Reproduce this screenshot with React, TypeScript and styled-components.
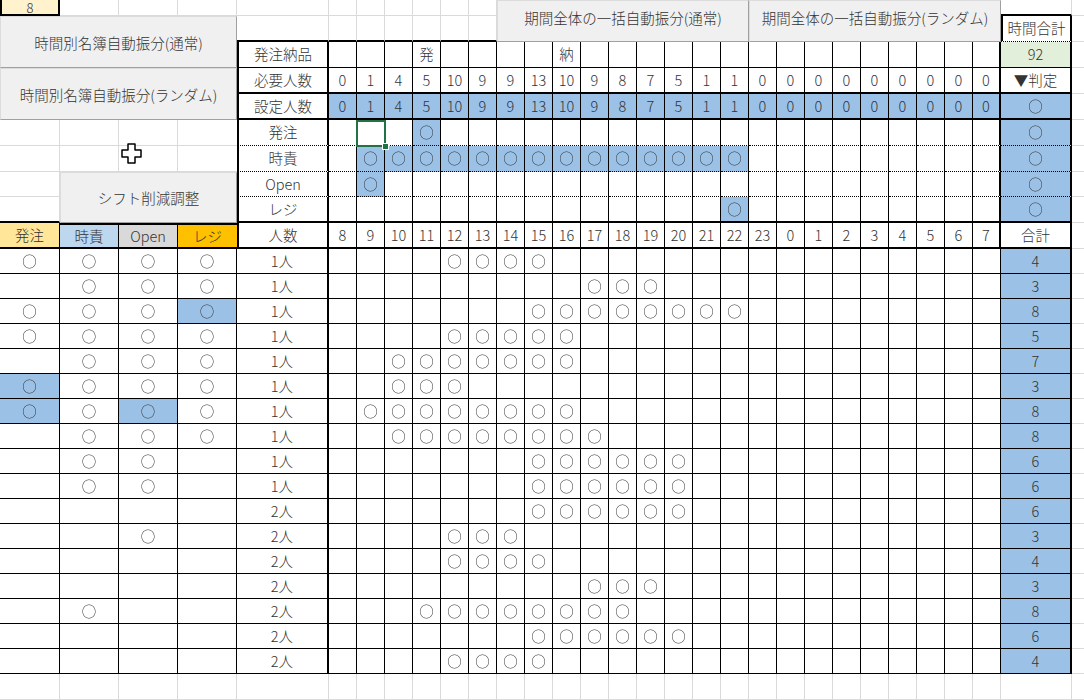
import React from "react";
import styled, { createGlobalStyle } from "styled-components";

type Line = "g" | "n" | "t" | "T" | "d";

const GRID = "#dadada";
const BLUE = "#9bc2e6";
const GREEN = "#e2efda";
const CIRCLE = "○";

const line = (l: Line) => {
  switch (l) {
    case "n":
      return "none";
    case "t":
      return "1px solid #000";
    case "T":
      return "2px solid #000";
    case "d":
      return "1px dotted #000";
    default:
      return `1px solid ${GRID}`;
  }
};

const GlobalStyle = createGlobalStyle`
  html, body {
    margin: 0;
    padding: 0;
    background: #fff;
  }
  body {
    overflow: hidden;
  }
`;

const Sheet = styled.div`
  position: relative;
  display: grid;
  grid-template-columns: 60px repeat(3, 59px) 92px repeat(24, 28px) 71px 1fr;
  grid-template-rows: 16px repeat(6, 26px) 25px 26px 26px repeat(17, 25px) 1fr;
  width: 1084px;
  height: 700px;
  overflow: hidden;
  background: #fff;
  font-family: "Noto Sans CJK JP", "Noto Sans", sans-serif;
  font-size: 14.5px;
  font-weight: 300;
  color: #333;
`;

interface CellProps {
  $r: number;
  $c: number;
  $bg?: string;
  $top?: Line;
  $right?: Line;
  $bottom?: Line;
  $left?: Line;
}

const Cell = styled.div<CellProps>`
  grid-row: ${(p) => p.$r};
  grid-column: ${(p) => p.$c};
  position: relative;
  box-sizing: border-box;
  display: flex;
  align-items: center;
  justify-content: center;
  min-width: 0;
  background: ${(p) => p.$bg || "#fff"};
  border-top: ${(p) => line(p.$top ?? "n")};
  border-right: ${(p) => line(p.$right ?? "g")};
  border-bottom: ${(p) => line(p.$bottom ?? "g")};
  border-left: ${(p) => line(p.$left ?? "n")};
  line-height: 1;
  white-space: nowrap;
`;

const TopCell = styled(Cell)`
  font-size: 13px;
  line-height: 13px;
`;

const Mark = styled.span`
  display: inline-block;
  font-size: 14.5px;
  color: #333;
  filter: grayscale(100%);
`;

const SheetButton = styled.div<{ $r: string; $c: string; $lift?: number }>`
  grid-row: ${(p) => p.$r};
  grid-column: ${(p) => p.$c};
  box-sizing: border-box;
  display: flex;
  align-items: center;
  justify-content: center;
  padding-bottom: ${(p) => p.$lift ?? 0}px;
  background: #f0f0f0;
  border: 1px solid;
  border-color: #dcdcdc #a0a0a0 #a0a0a0 #dcdcdc;
  font-size: 14.5px;
  color: #333;
  white-space: nowrap;
  z-index: 1;
`;

const ActiveFrame = styled.div`
  position: absolute;
  left: -1px;
  top: 0;
  right: -2px;
  bottom: -2px;
  border: 2px solid #217346;
  z-index: 3;
`;

const FillHandle = styled.div`
  position: absolute;
  right: -5px;
  bottom: -5px;
  width: 5px;
  height: 5px;
  background: #217346;
  border: 1px solid #fff;
`;

const Cursor = styled.svg`
  position: absolute;
  left: 121px;
  top: 143px;
  z-index: 5;
`;

const HOURS = [8, 9, 10, 11, 12, 13, 14, 15, 16, 17, 18, 19, 20, 21, 22, 23, 0, 1, 2, 3, 4, 5, 6, 7];
const NEEDED = [0, 1, 4, 5, 10, 9, 9, 13, 10, 9, 8, 7, 5, 1, 1, 0, 0, 0, 0, 0, 0, 0, 0, 0];

const hourCol = (h: number) => 6 + h;
const TOTAL_COL = 30;
const EDGE_COL = 31;

const range = (a: number, b: number) => Array.from({ length: b - a + 1 }, (_, i) => a + i);

interface Duty {
  label: string;
  on: number[];
}

const duties: Duty[] = [
  { label: "発注", on: [3] },
  { label: "時責", on: range(1, 14) },
  { label: "Open", on: [1] },
  { label: "レジ", on: [14] },
];

interface Staff {
  marks: number[];
  people: string;
  from: number;
  to: number;
}

// marks: 0 = empty, 1 = ○, 2 = ○ on blue
const staff: Staff[] = [
  { marks: [1, 1, 1, 1], people: "1人", from: 4, to: 7 },
  { marks: [0, 1, 1, 1], people: "1人", from: 9, to: 11 },
  { marks: [1, 1, 1, 2], people: "1人", from: 7, to: 14 },
  { marks: [1, 1, 1, 1], people: "1人", from: 4, to: 8 },
  { marks: [0, 1, 1, 1], people: "1人", from: 2, to: 8 },
  { marks: [2, 1, 1, 1], people: "1人", from: 2, to: 4 },
  { marks: [2, 1, 2, 1], people: "1人", from: 1, to: 8 },
  { marks: [0, 1, 1, 1], people: "1人", from: 2, to: 9 },
  { marks: [0, 1, 1, 0], people: "1人", from: 7, to: 12 },
  { marks: [0, 1, 1, 0], people: "1人", from: 7, to: 12 },
  { marks: [0, 0, 0, 0], people: "2人", from: 7, to: 12 },
  { marks: [0, 0, 1, 0], people: "2人", from: 4, to: 6 },
  { marks: [0, 0, 0, 0], people: "2人", from: 4, to: 7 },
  { marks: [0, 0, 0, 0], people: "2人", from: 9, to: 11 },
  { marks: [0, 1, 0, 0], people: "2人", from: 3, to: 10 },
  { marks: [0, 0, 0, 0], people: "2人", from: 7, to: 12 },
  { marks: [0, 0, 0, 0], people: "2人", from: 4, to: 7 },
];

const heads: [string, string][] = [
  ["発注", "#ffe699"],
  ["時責", "#bdd7ee"],
  ["Open", "#d9d9d9"],
  ["レジ", "#ffc000"],
];

interface Spec {
  r: number;
  c: number;
  text?: string;
  bg?: string;
  t?: Line;
  rt?: Line;
  b?: Line;
  l?: Line;
  active?: boolean;
}

const buildCells = (): Spec[] => {
  const s: Spec[] = [];
  const plain = (r: number, c: number, extra: Partial<Spec> = {}) => s.push({ r, c, ...extra });
  const edge = (r: number) => s.push({ r, c: EDGE_COL, rt: "n" });
  const hourRight = (h: number): Line => (h === 23 ? "T" : "t");

  // top rows above the table
  for (let c = 2; c <= 11; c++) plain(1, c);
  plain(1, TOTAL_COL, { b: "T" });
  edge(1);
  for (let c = 5; c <= 11; c++) plain(2, c, { b: "T" });
  s.push({ r: 2, c: TOTAL_COL, text: "時間合計", l: "T", rt: "T", b: "d" });
  edge(2);

  // 発注納品
  s.push({ r: 3, c: 5, text: "発注納品", l: "T", rt: "T", b: "t" });
  HOURS.forEach((_, h) =>
    s.push({ r: 3, c: hourCol(h), text: h === 3 ? "発" : h === 8 ? "納" : undefined, rt: hourRight(h), b: "t" })
  );
  s.push({ r: 3, c: TOTAL_COL, text: "92", bg: GREEN, rt: "T", b: "t" });
  edge(3);

  // 必要人数
  s.push({ r: 4, c: 5, text: "必要人数", l: "T", rt: "T", b: "T" });
  HOURS.forEach((_, h) => s.push({ r: 4, c: hourCol(h), text: String(NEEDED[h]), rt: hourRight(h), b: "T" }));
  s.push({ r: 4, c: TOTAL_COL, text: "▼判定", rt: "T", b: "T" });
  edge(4);

  // 設定人数
  s.push({ r: 5, c: 5, text: "設定人数", l: "T", rt: "T", b: "T" });
  HOURS.forEach((_, h) =>
    s.push({ r: 5, c: hourCol(h), text: String(NEEDED[h]), bg: BLUE, rt: hourRight(h), b: "T" })
  );
  s.push({ r: 5, c: TOTAL_COL, text: CIRCLE, bg: BLUE, rt: "T", b: "T" });
  edge(5);

  // duty rows
  duties.forEach((d, i) => {
    const r = 6 + i;
    const last = i === duties.length - 1;
    const bottom: Line = last ? "T" : "d";
    if (r <= 7) {
      plain(r, 1);
      plain(r, 2);
      plain(r, 3);
      plain(r, 4, { rt: "n" });
    } else {
      plain(r, 1, last ? { b: "T" } : {});
    }
    s.push({ r, c: 5, text: d.label, l: "T", rt: "T", b: bottom });
    HOURS.forEach((_, h) => {
      const on = d.on.includes(h);
      s.push({
        r,
        c: hourCol(h),
        text: on ? CIRCLE : undefined,
        bg: on ? BLUE : undefined,
        rt: hourRight(h),
        b: bottom,
        active: i === 0 && h === 1,
      });
    });
    s.push({ r, c: TOTAL_COL, text: CIRCLE, bg: BLUE, rt: "T", b: bottom });
    edge(r);
  });

  // header row
  heads.forEach(([text, bg], i) =>
    s.push({ r: 10, c: i + 1, text, bg, t: i > 0 ? "T" : undefined, rt: i === 3 ? "n" : "t", b: "T" })
  );
  s.push({ r: 10, c: 5, text: "人数", l: "T", rt: "T", b: "T" });
  HOURS.forEach((hr, h) => s.push({ r: 10, c: hourCol(h), text: String(hr), rt: hourRight(h), b: "T" }));
  s.push({ r: 10, c: TOTAL_COL, text: "合計", rt: "T", b: "T" });
  edge(10);

  // staff rows
  staff.forEach((p, i) => {
    const r = 11 + i;
    p.marks.forEach((m, k) =>
      s.push({ r, c: k + 1, text: m ? CIRCLE : undefined, bg: m === 2 ? BLUE : undefined, rt: "t", b: "t" })
    );
    s.push({ r, c: 5, text: p.people, rt: "T", b: "t" });
    HOURS.forEach((_, h) =>
      s.push({ r, c: hourCol(h), text: h >= p.from && h <= p.to ? CIRCLE : undefined, rt: "t", b: "t" })
    );
    s.push({ r, c: TOTAL_COL, text: String(p.to - p.from + 1), bg: BLUE, rt: "T", b: "t" });
    edge(r);
  });

  // empty row under the table
  for (let c = 1; c <= TOTAL_COL; c++) plain(28, c);
  edge(28);

  return s;
};

const cells = buildCells();

const App: React.FC = () => (
  <>
    <GlobalStyle />
    <Sheet>
      <TopCell $r={1} $c={1} $bg="#fff2cc" $left="T" $right="T" $bottom="T">
        8
      </TopCell>

      <SheetButton $r="2 / 4" $c="1 / 5">時間別名簿自動振分(通常)</SheetButton>
      <SheetButton $r="4 / 6" $c="1 / 5">時間別名簿自動振分(ランダム)</SheetButton>
      <SheetButton $r="8 / 10" $c="2 / 5">シフト削減調整</SheetButton>
      <SheetButton $r="1 / 3" $c="12 / 21" $lift={8}>
        期間全体の一括自動振分(通常)
      </SheetButton>
      <SheetButton $r="1 / 3" $c="21 / 30" $lift={8}>
        期間全体の一括自動振分(ランダム)
      </SheetButton>

      {cells.map((s) => (
        <Cell
          key={`${s.r}-${s.c}`}
          $r={s.r}
          $c={s.c}
          $bg={s.bg}
          $top={s.t}
          $right={s.rt}
          $bottom={s.b}
          $left={s.l}
        >
          {s.text === CIRCLE ? <Mark>{CIRCLE}</Mark> : s.text}
          {s.active && (
            <ActiveFrame>
              <FillHandle />
            </ActiveFrame>
          )}
        </Cell>
      ))}

      <Cursor width="21" height="21" viewBox="0 0 21 21">
        <polygon
          points="7,1 14,1 14,7 20,7 20,14 14,14 14,20 7,20 7,14 1,14 1,7 7,7"
          fill="#fff"
          stroke="#000"
          strokeWidth="1.5"
          strokeLinejoin="round"
        />
      </Cursor>
    </Sheet>
  </>
);

export default App;
